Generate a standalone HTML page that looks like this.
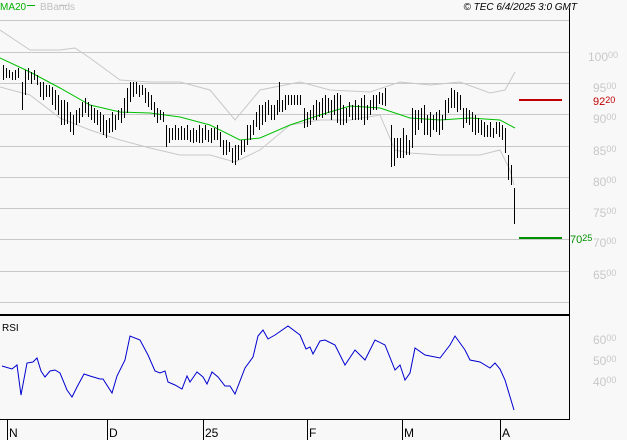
<!DOCTYPE html>
<html><head><meta charset="utf-8"><style>
body{margin:0;background:#f8f8f8;}
svg{display:block;font-family:"Liberation Sans",sans-serif;}
</style></head><body>
<svg width="627" height="440" viewBox="0 0 627 440" xmlns="http://www.w3.org/2000/svg">
<rect width="627" height="440" fill="#f8f8f8"/>
<g stroke="#c8c8c8" stroke-width="1">
<line x1="0" y1="20.5" x2="569" y2="20.5"/><line x1="0" y1="52.5" x2="569" y2="52.5"/>
<line x1="0" y1="83.5" x2="569" y2="83.5"/><line x1="0" y1="114.5" x2="569" y2="114.5"/>
<line x1="0" y1="146.5" x2="569" y2="146.5"/><line x1="0" y1="177.5" x2="569" y2="177.5"/>
<line x1="0" y1="208.5" x2="569" y2="208.5"/><line x1="0" y1="239.5" x2="569" y2="239.5"/>
<line x1="0" y1="271.5" x2="569" y2="271.5"/><line x1="0" y1="302.5" x2="569" y2="302.5"/>
</g>
<line x1="569.5" y1="8" x2="569.5" y2="420" stroke="#000"/>
<line x1="0" y1="315" x2="570" y2="315" stroke="#000" stroke-width="2"/>
<line x1="0" y1="419.5" x2="570" y2="419.5" stroke="#000"/>
<g stroke="#000"><line x1="7.5" y1="419" x2="7.5" y2="440"/><line x1="107.5" y1="419" x2="107.5" y2="440"/><line x1="203.5" y1="419" x2="203.5" y2="440"/><line x1="307.5" y1="419" x2="307.5" y2="440"/><line x1="402.5" y1="419" x2="402.5" y2="440"/><line x1="500.5" y1="419" x2="500.5" y2="440"/></g>
<g font-size="12" fill="#000"><text x="9" y="437">N</text><text x="109" y="437">D</text><text x="205" y="437">25</text><text x="309" y="437">F</text><text x="404" y="437">M</text><text x="502" y="437">A</text></g>
<text x="0" y="10" font-size="10" fill="#00b000">MA20</text><line x1="27" y1="5.5" x2="35" y2="5.5" stroke="#00b000"/>
<text x="40" y="10" font-size="10" fill="#c0c0c0">BBands</text><line x1="59" y1="5.5" x2="67" y2="5.5" stroke="#c0c0c0"/>
<text x="577" y="10" font-size="10" font-style="italic" fill="#000" text-anchor="end">© TEC 6/4/2025 3:0 GMT</text>
<g font-size="12" fill="#c8c8c8">
<text x="588" y="61">100<tspan font-size="9" dy="-3">00</tspan></text>
<text x="593" y="92">95<tspan font-size="9" dy="-3">00</tspan></text>
<text x="593" y="123">90<tspan font-size="9" dy="-3">00</tspan></text>
<text x="593" y="155">85<tspan font-size="9" dy="-3">00</tspan></text>
<text x="593" y="186">80<tspan font-size="9" dy="-3">00</tspan></text>
<text x="593" y="217">75<tspan font-size="9" dy="-3">00</tspan></text>
<text x="593" y="247">70<tspan font-size="9" dy="-3">00</tspan></text>
<text x="593" y="279">65<tspan font-size="9" dy="-3">00</tspan></text>
<text x="593" y="344">60<tspan font-size="9" dy="-3">00</tspan></text>
<text x="593" y="365">50<tspan font-size="9" dy="-3">00</tspan></text>
<text x="593" y="386">40<tspan font-size="9" dy="-3">00</tspan></text>
</g>
<text x="2" y="331" font-size="10" fill="#000">RSI</text>
<line x1="519" y1="100" x2="562" y2="100" stroke="#c00000" stroke-width="2"/>
<text x="593" y="105" font-size="11" fill="#c00000">92<tspan font-size="9" dy="-2">20</tspan></text>
<line x1="519" y1="238" x2="562" y2="238" stroke="#009000" stroke-width="2"/>
<text x="570" y="243" font-size="11" fill="#009000">70<tspan font-size="9" dy="-2">25</tspan></text>
<polyline fill="none" stroke="#c8c8c8" points="0,30 30,50 60,50 75,48 90,58 120,80 150,82 180,82 210,90 235,120 260,90 300,82 330,90 370,92 400,82 430,85 460,82 490,93 505,90 515,72"/>
<polyline fill="none" stroke="#c8c8c8" points="0,87 30,95 60,118 90,130 120,140 150,148 180,155 210,155 235,162 260,150 290,125 320,120 350,120 380,115 395,150 410,153 440,155 480,155 500,150 510,170 514,185"/>
<polyline fill="none" stroke="#00c000" points="0,58 30,72 60,88 90,105 120,112 150,113 180,117 210,125 240,140 260,138 290,125 320,115 350,106 380,108 410,118 440,120 470,118 500,120 515,128"/>
<polyline fill="none" stroke="#0000d0" points="2,366 12,369 17,365 21,395 27,363 33,362 37,358 41,371 45,377 50,371 55,370 60,373 67,390 72,397 77,387 84,374 90,376 100,379 103,379 112,393 117,376 125,360 130,336 140,340 148,355 155,371 160,373 165,371 168,382 175,385 182,389 187,376 190,382 197,372 203,377 207,384 212,372 218,377 225,386 230,386 235,394 245,368 253,357 258,336 263,330 268,339 275,335 288,326 300,335 306,349 310,347 313,354 320,341 325,340 335,345 345,365 355,350 365,360 375,340 385,345 395,370 400,365 405,380 410,373 415,348 425,355 440,358 450,345 455,336 465,350 470,360 480,362 490,368 495,363 500,369 505,380 514,410"/>
<g stroke="#000" fill="none" transform="translate(0.5,0)">
<path d="M3,65v15M6,68v10M9,70v8M12,72v8M15,70v10M18,68v10M22,82v28M25,70v25M28,68v12M31,72v12M34,70v10M37,75v10M40,82v15M43,82v18M46,85v12M49,85v12M52,87v18M55,90v20M58,95v20M61,100v25M64,100v25M67,102v22M70,112v20M73,115v20M76,110v15M79,108v15M82,102v15M85,98v15M88,102v15M91,105v15M94,108v15M97,110v15M100,112v20M103,115v20M106,120v18M109,118v15M112,112v20M115,115v15M118,110v10M121,108v15M124,98v20M127,88v25M130,82v20M133,82v15M136,82v12M139,85v12M142,85v10M145,88v15M148,92v15M151,95v15M154,102v15M157,108v15M160,110v10M163,112v10M166,125v22M169,128v15M172,128v12M175,125v15M178,128v12M181,126v14M184,128v12M187,125v15M190,130v12M193,128v15M196,130v12M199,125v18M202,128v15M205,125v15M208,130v12M211,128v15M214,128v12M217,125v15M220,132v15M223,140v15M226,140v15M229,142v10M232,148v15M235,145v20M238,145v15M241,140v15M244,140v12M247,125v20M250,125v15M253,120v15M256,112v15M259,105v25M262,105v20M265,102v20M268,100v15M271,105v15M274,105v15M277,100v15M279,82v30M282,100v12M285,95v15M288,95v10M291,95v10M294,95v10M297,95v10M300,95v10M304,108v20M307,112v15M310,110v15M313,105v15M316,100v20M319,102v15M322,98v20M325,95v20M328,98v15M331,100v20M334,95v20M337,93v30M340,95v30M343,105v20M346,108v15M349,102v15M352,105v15M355,100v20M358,105v15M361,98v22M364,95v30M367,105v15M370,100v15M373,95v15M376,95v15M379,92v12M382,93v12M385,88v18M391,125v42M394,138v28M397,138v20M400,138v20M403,128v30M406,135v20M409,140v15M412,108v40M415,110v25M418,110v20M421,108v15M424,105v30M427,115v20M430,112v25M433,115v15M436,112v20M439,110v25M442,115v15M445,100v20M448,98v15M451,88v20M454,90v18M457,92v20M460,95v15M463,108v20M466,108v15M469,110v15M472,112v20M475,115v20M478,118v15M481,120v15M484,122v15M487,125v12M490,122v15M493,128v10M496,122v12M499,122v15M502,125v15M505,128v25M508,155v25M511,165v20M514,188v36"/>
</g>
</svg>
</body></html>
